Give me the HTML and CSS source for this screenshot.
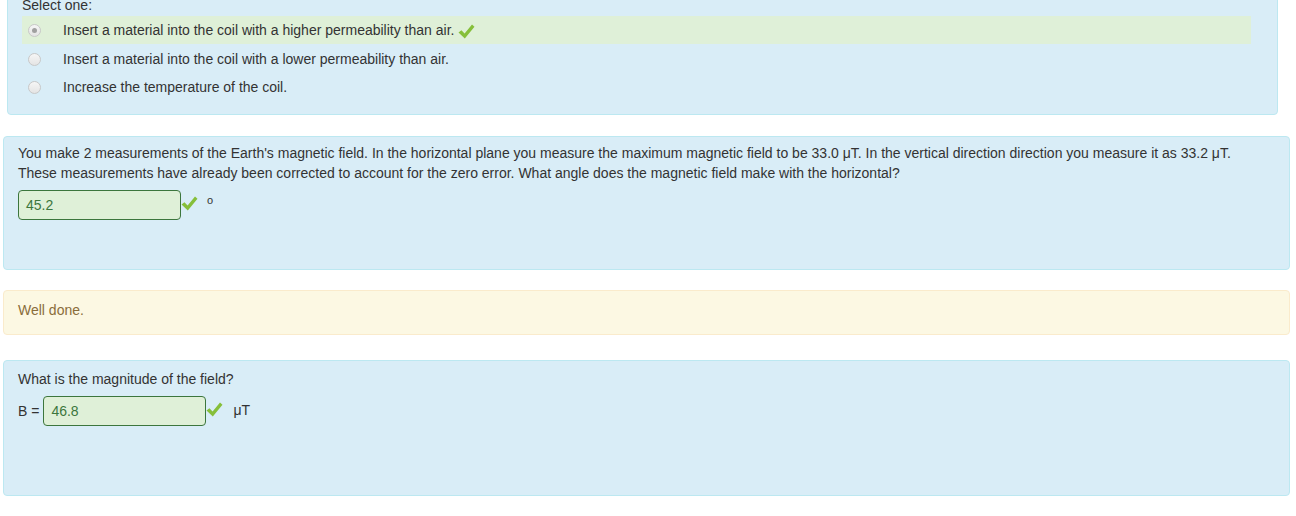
FILE: index.html
```html
<!DOCTYPE html>
<html>
<head>
<meta charset="utf-8">
<link rel="stylesheet" href="styles.css">
</head>
<body>
<div class="page">
  <div class="box box-first">
    <div class="prompt">Select one:</div>
    <div class="answers">
      <div class="opt correct">
        <span class="radio checked"></span>
        <span class="label">Insert a material into the coil with a higher permeability than air.</span>
        <svg class="tick" width="17" height="17" viewBox="0 0 17 17"><path d="M0.5 9.5 L3.4 7.2 L6.6 10.6 L14 1.5 L16.5 3.8 L6.8 15.5 Z" fill="#86bf3a"/></svg>
      </div>
      <div class="opt">
        <span class="radio"></span>
        <span class="label">Insert a material into the coil with a lower permeability than air.</span>
      </div>
      <div class="opt">
        <span class="radio"></span>
        <span class="label">Increase the temperature of the coil.</span>
      </div>
    </div>
  </div>

  <div class="box box-q box-mid">
    <p class="qtext">You make 2 measurements of the Earth's magnetic field. In the horizontal plane you measure the maximum magnetic field to be 33.0 μT. In the vertical direction direction you measure it as 33.2 μT. These measurements have already been corrected to account for the zero error. What angle does the magnetic field make with the horizontal?</p>
    <div class="ansline">
      <span class="field">45.2</span>
      <svg class="tick" width="17" height="17" viewBox="0 0 17 17"><path d="M0.5 9.5 L3.4 7.2 L6.6 10.6 L14 1.5 L16.5 3.8 L6.8 15.5 Z" fill="#86bf3a"/></svg>
      <span class="unit deg">o</span>
    </div>
  </div>

  <div class="box feedback">Well done.</div>

  <div class="box box-q box-last">
    <p class="qtext">What is the magnitude of the field?</p>
    <div class="ansline">
      <span class="pre">B =</span>
      <span class="field">46.8</span>
      <svg class="tick" width="17" height="17" viewBox="0 0 17 17"><path d="M0.5 9.5 L3.4 7.2 L6.6 10.6 L14 1.5 L16.5 3.8 L6.8 15.5 Z" fill="#86bf3a"/></svg>
      <span class="unit">μT</span>
    </div>
  </div>
</div>
</body>
</html>
```

FILE: styles.css
```css
html, body {
  margin: 0;
  padding: 0;
  background: #ffffff;
}
body {
  font-family: "Liberation Sans", Arial, sans-serif;
  font-size: 14px;
  line-height: 20px;
  color: #333333;
}
.page {
  margin-top: -15px;
  padding-left: 3px;
  width: 1287px;
}
.box {
  background: #d9edf7;
  border: 1px solid #bce8f1;
  border-radius: 4px;
  box-sizing: border-box;
}
.box-first {
  margin-left: 4px;
  width: 1271px;
  padding: 9px 14px 13px 14px;
}
.prompt {
  line-height: 20px;
  margin-bottom: 1px;
}
.answers {
  display: flex;
  flex-direction: column;
}
.opt {
  display: flex;
  align-items: center;
  height: 28px;
  padding-left: 6px;
  margin-right: 12px;
}
.opt.correct {
  background: #dff0d8;
  height: 28px;
  margin-bottom: 1px;
}
.radio {
  width: 11px;
  height: 11px;
  border-radius: 50%;
  border: 1px solid #c8c8c8;
  background: linear-gradient(#f6f6f6, #e4e4e4);
  box-sizing: content-box;
  margin-right: 22px;
  position: relative;
  flex: none;
}
.radio.checked::after {
  content: "";
  position: absolute;
  left: 3px;
  top: 3px;
  width: 5px;
  height: 5px;
  border-radius: 50%;
  background: #a0a0a0;
}
.label {
  white-space: nowrap;
}
.opt .tick {
  margin-left: 4px;
  margin-top: 2px;
}
.box-q {
  margin-top: 21px;
  padding: 6px 34px 14px 14px;
  height: 134px;
}
.qtext {
  margin: 0 0 7px 0;
}
.ansline {
  display: flex;
  align-items: center;
}
.field {
  display: inline-block;
  width: 163px;
  height: 30px;
  box-sizing: border-box;
  border: 1px solid #3c763d;
  border-radius: 4px;
  background: #dff0d8;
  color: #3c763d;
  padding: 0 7px;
  line-height: 28px;
}
.ansline .tick {
  margin-left: 0;
  margin-top: -4px;
}
.unit {
  margin-left: 10px;
  margin-top: -2px;
}
.unit.deg {
  font-size: 11px;
  margin-left: 9px;
  margin-top: -10px;
}
.pre {
  margin-right: 4px;
}
.feedback {
  margin-top: 20px;
  background: #fcf8e3;
  border-color: #faebcc;
  color: #8a6d3b;
  padding: 9px 14px;
  height: 45px;
}
.box-last {
  margin-top: 25px;
  height: 136px;
  padding-top: 8px;
}
.box-last .qtext {
  margin-bottom: 7px;
}
```
